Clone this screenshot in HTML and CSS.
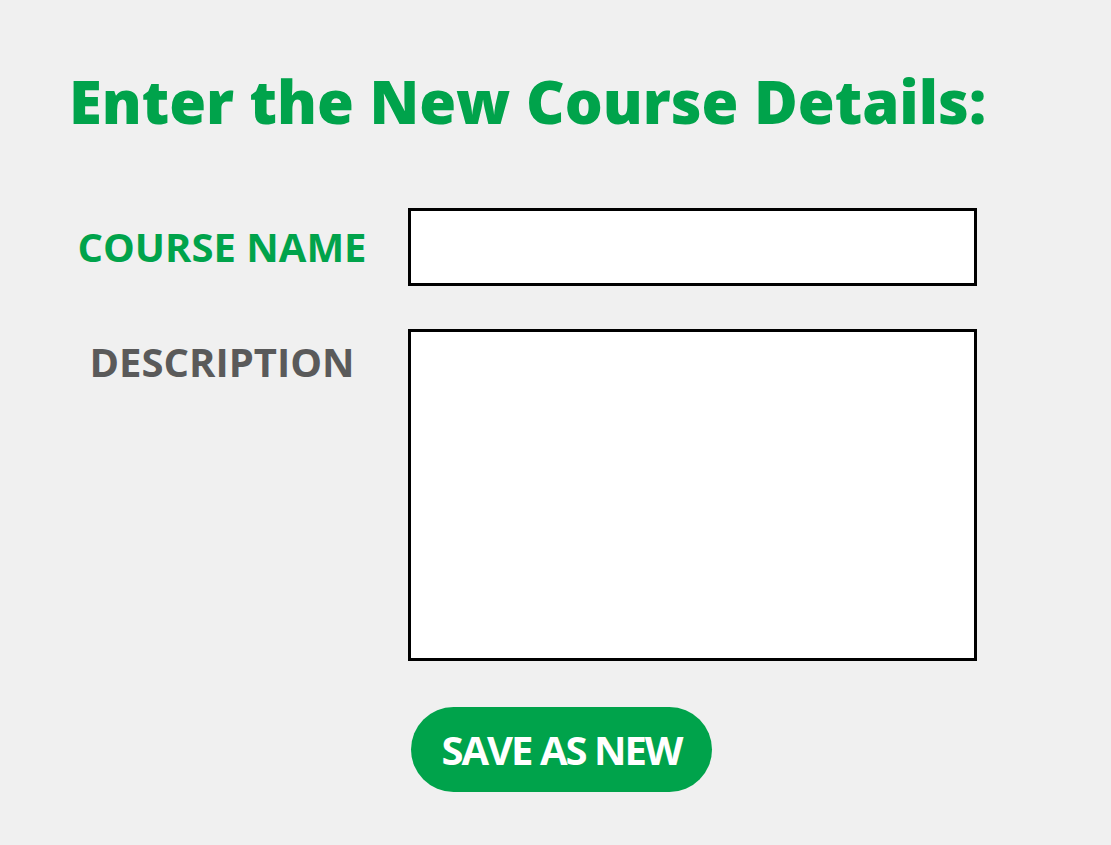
FILE: index.html
```html
<!DOCTYPE html>
<html>
<head>
<meta charset="utf-8">
<link rel="stylesheet" href="styles.css">
</head>
<body>
<div class="page">
  <h1 class="title">Enter the New Course Details:</h1>
  <form class="form">
    <label class="label label-active" for="name">COURSE NAME</label>
    <input class="field" id="name" type="text">
    <label class="label label-desc" for="desc">DESCRIPTION</label>
    <textarea class="field area" id="desc"></textarea>
    <div class="spacer"></div>
    <div class="actions"><button type="button" class="btn">SAVE AS NEW</button></div>
  </form>
</div>
</body>
</html>
```

FILE: styles.css
```css
html, body {
  margin: 0;
  padding: 0;
  background: #f0f0f0;
}
body {
  font-family: "Open Sans", "Liberation Sans", sans-serif;
}
.page {
  padding: 71px 0 0 69px;
}
.title {
  margin: 0;
  font-size: 59.7px;
  line-height: 1;
  font-weight: 800;
  color: #00a34b;
}
.form {
  display: grid;
  grid-template-columns: 306px 569px;
  column-gap: 33px;
  row-gap: 43px;
  margin-top: 77px;
  align-items: start;
}
.label {
  font-size: 40px;
  line-height: 1;
  font-weight: 700;
  text-align: center;
  white-space: nowrap;
}
.label-active {
  color: #00a34b;
  align-self: center;
}
.label-desc {
  color: #5a5a5a;
  padding-top: 13px;
}
.field {
  box-sizing: border-box;
  display: block;
  width: 569px;
  height: 78px;
  margin: 0;
  border: 3px solid #000;
  background: #fff;
  outline: none;
  font: inherit;
  resize: none;
}
.area {
  height: 332px;
}
.actions {
  margin-top: 3px;
}
.btn {
  display: block;
  width: 301px;
  height: 85px;
  border: none;
  border-radius: 43px;
  background: #00a34b;
  color: #fff;
  font-family: "Open Sans", "Liberation Sans", sans-serif;
  font-weight: 700;
  font-size: 40px;
  letter-spacing: -2px;
  padding: 0;
  margin-left: 3px;
}
```
